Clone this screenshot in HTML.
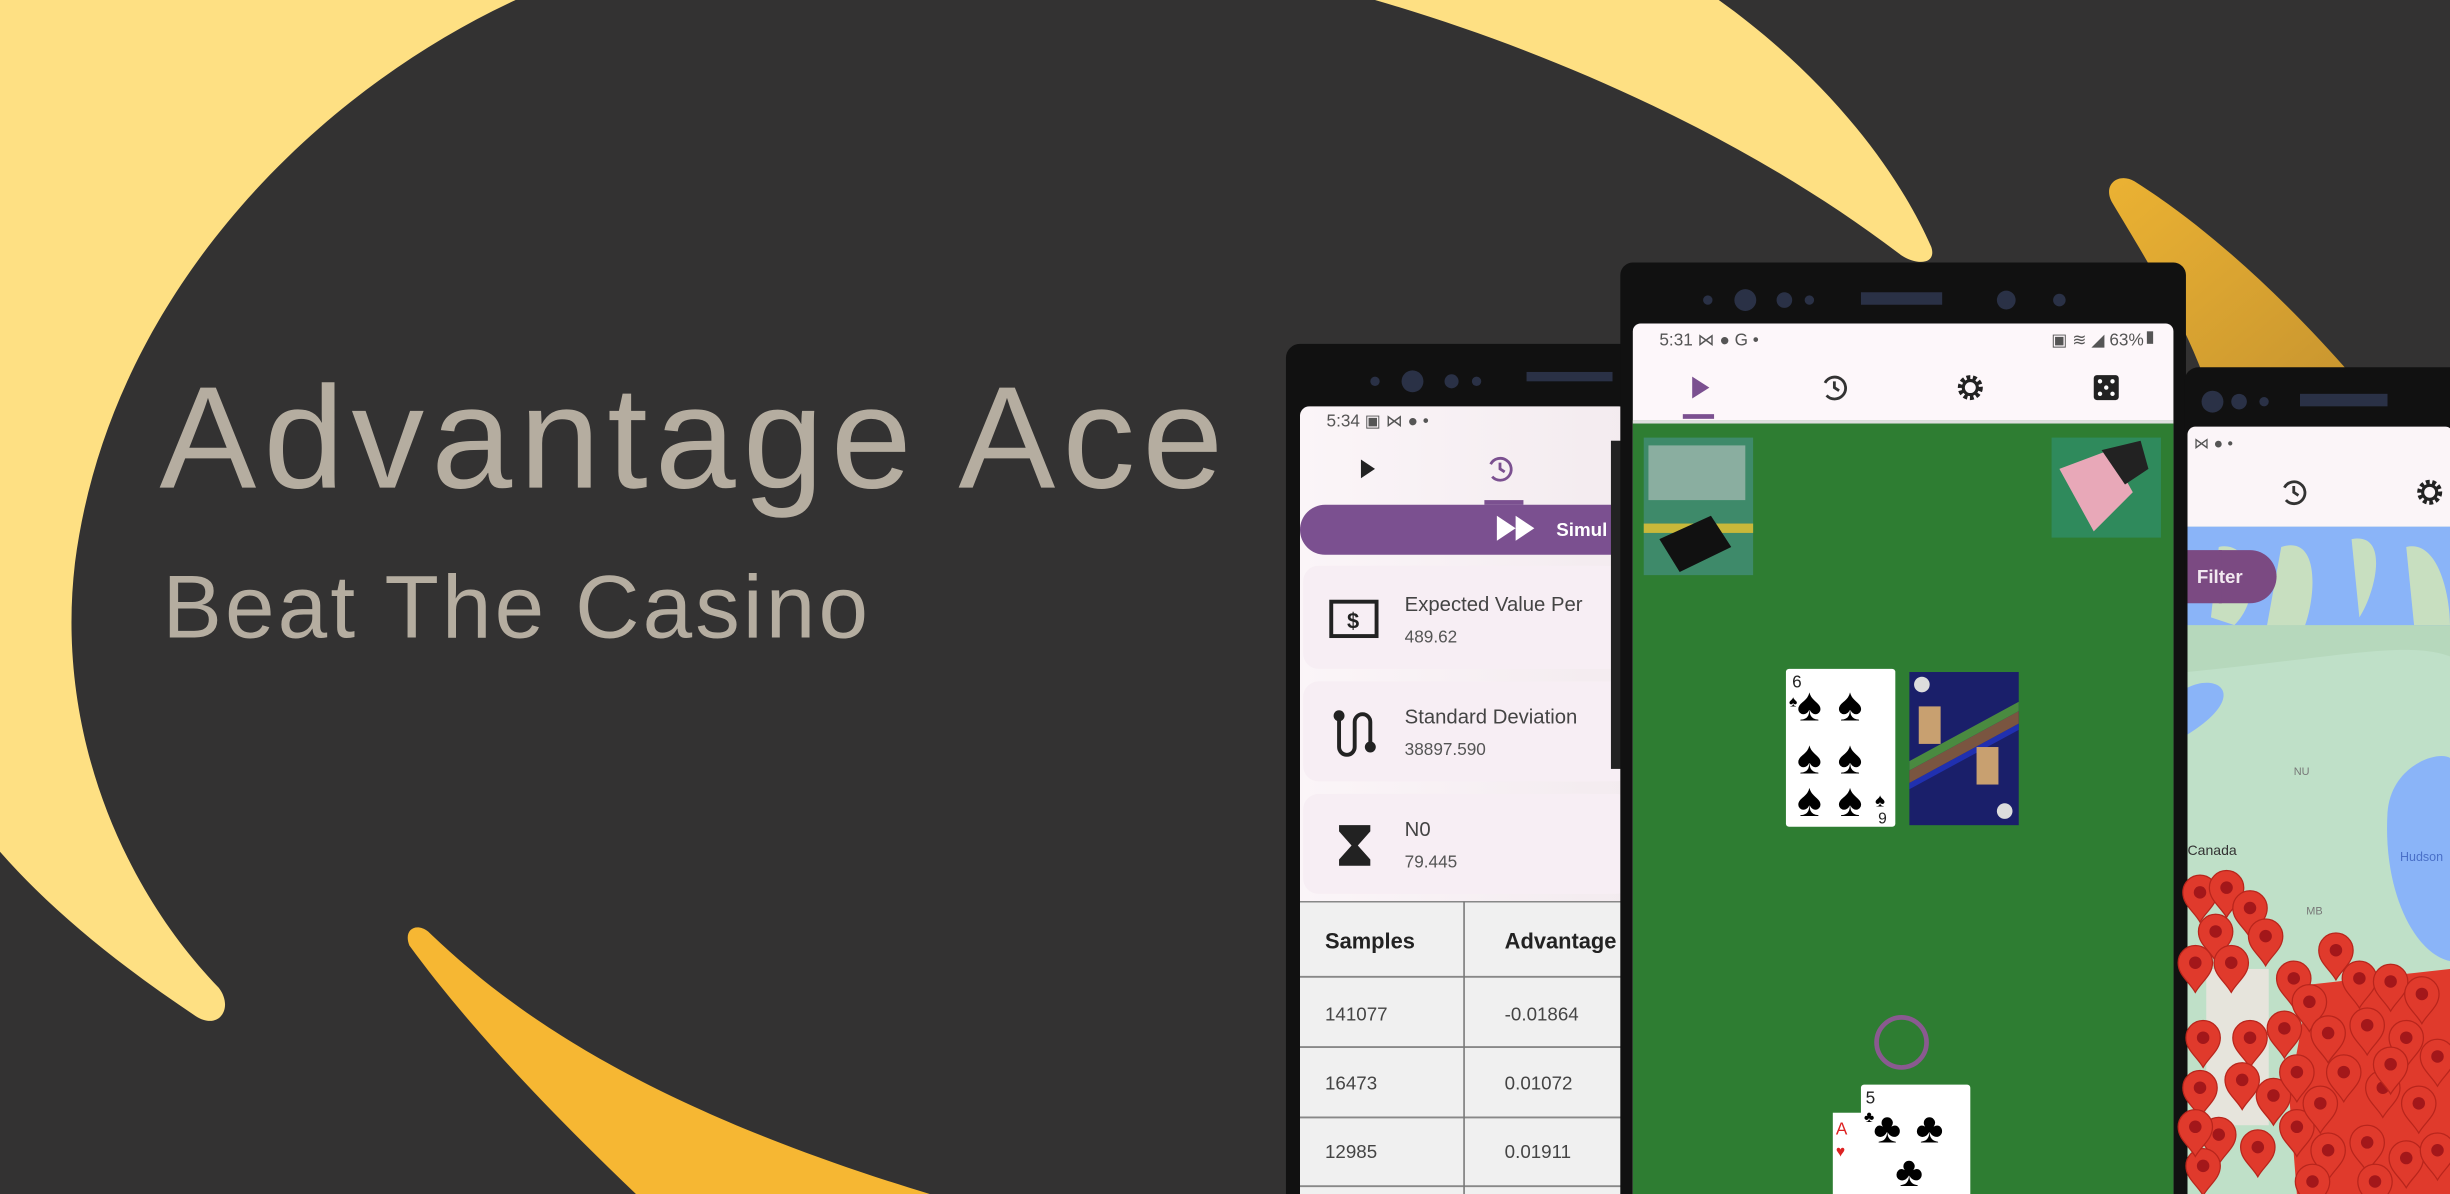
<!DOCTYPE html>
<html><head><meta charset="utf-8"><style>
html,body{margin:0;padding:0;background:#333232;overflow:hidden}
svg{display:block}
text{font-family:"Liberation Sans",sans-serif}
</style></head><body>
<svg width="2450" height="1194" viewBox="0 0 1568 764" preserveAspectRatio="none" xmlns="http://www.w3.org/2000/svg">
<defs>
<linearGradient id="gold" x1="0" y1="0" x2="1" y2="1"><stop offset="0" stop-color="#ebb233"/><stop offset="1" stop-color="#c9962f"/></linearGradient>
<linearGradient id="scr" x1="0" y1="0" x2="1" y2="0"><stop offset="0" stop-color="#fbf5f8"/><stop offset="1" stop-color="#f3ebef"/></linearGradient>
<g id="pin"><path d="M0,15 C-4,8 -11,4 -11,-4 A11,11 0 1 1 11,-4 C11,4 4,8 0,15Z" fill="#e03a2c" stroke="#b8251c" stroke-width="0.8"/><circle cx="0" cy="-4" r="4" fill="#a3171a"/></g>
</defs>
<rect width="1568" height="764" fill="#333232"/>
<path d="M0,0 L1100,0 C1170,50 1215,110 1236,158 C1240,170 1225,170 1215,162 C1120,90 1000,35 880,0 L330,0 C200,60 70,190 48,360 C35,470 80,570 140,632 C150,645 140,660 125,650 C80,620 35,585 0,545 Z" fill="#fee083"/>
<path d="M262,605 C258,595 266,590 274,596 C320,640 400,705 595,764 L407,764 C340,700 295,650 262,605 Z" fill="#f6b733"/>
<path d="M1352,130 C1345,118 1356,110 1366,116 C1420,150 1470,200 1505,240 L1410,240 C1395,200 1370,160 1352,130 Z" fill="url(#gold)"/>

<text x="102" y="312" font-size="93" fill="#b5ada0" letter-spacing="4.6">Advantage Ace</text>
<text x="104" y="408" font-size="57" fill="#b5ada0" letter-spacing="2">Beat The Casino</text>

<!-- LEFT PHONE -->
<rect x="823" y="220" width="230" height="560" rx="9" fill="#111"/>
<circle cx="880" cy="244" r="3" fill="#2a3146"/><circle cx="904" cy="244" r="7" fill="#2a3146"/><circle cx="929" cy="244" r="4.5" fill="#2a3146"/><circle cx="945" cy="244" r="3" fill="#2a3146"/>
<rect x="977" y="238" width="55" height="6" fill="#2a3146"/>
<rect x="832" y="260" width="210" height="520" rx="6" fill="url(#scr)"/>
<text x="849" y="273" font-size="11" fill="#555">5:34 ▣ ⋈ ● •</text>
<path d="M871,294 L880,300 L871,306Z" fill="#222"/>
<g transform="translate(960,300)" fill="none" stroke="#7b5090" stroke-width="1.8"><path d="M-6,-3 A7,7 0 1 1 -5,5"/><path d="M0,-4 V0 L3,2"/></g>
<rect x="950" y="320" width="25" height="3" fill="#7b5090"/>
<path d="M848,323 H1040 V355 H848 A16,16 0 0 1 848,323Z" fill="#7b5090"/>
<path d="M958,330 L970,338 L958,346Z M970,330 L982,338 L970,346Z" fill="#fff"/>
<text x="996" y="343" font-size="12" font-weight="bold" fill="#fff">Simul</text>
<rect x="834" y="362" width="210" height="66" rx="10" fill="#f7eef4"/>
<rect x="834" y="436" width="210" height="64" rx="10" fill="#f7eef4"/>
<rect x="834" y="508" width="210" height="64" rx="10" fill="#f7eef4"/>
<rect x="852" y="385" width="29" height="22" fill="none" stroke="#222" stroke-width="2.5"/>
<text x="866" y="402" font-size="14" font-weight="bold" text-anchor="middle" fill="#222">$</text>
<text x="899" y="391" font-size="13" fill="#444">Expected Value Per</text>
<text x="899" y="411" font-size="11" fill="#555">489.62</text>
<path d="M857,458 V478 A5,5 0 0 0 867,478 V462 A5,5 0 0 1 877,462 V478" fill="none" stroke="#222" stroke-width="2.5"/>
<circle cx="857" cy="458" r="3.5" fill="#222"/><circle cx="877" cy="478" r="3.5" fill="#222"/>
<text x="899" y="463" font-size="13" fill="#444">Standard Deviation</text>
<text x="899" y="483" font-size="11" fill="#555">38897.590</text>
<path d="M857,528 H877 V532 L869,541 L877,550 V554 H857 V550 L865,541 L857,532Z" fill="#222"/>
<text x="899" y="535" font-size="13" fill="#444">N0</text>
<text x="899" y="555" font-size="11" fill="#555">79.445</text>
<rect x="832" y="577" width="210" height="190" fill="#f0f0f0"/>
<line x1="832" y1="577" x2="1042" y2="577" stroke="#888"/>
<line x1="832" y1="625" x2="1042" y2="625" stroke="#888" stroke-width="1.2"/>
<line x1="832" y1="670" x2="1042" y2="670" stroke="#888" stroke-width="1.2"/>
<line x1="832" y1="715" x2="1042" y2="715" stroke="#888" stroke-width="1.2"/>
<line x1="832" y1="759" x2="1042" y2="759" stroke="#888" stroke-width="1.2"/>
<line x1="937" y1="577" x2="937" y2="764" stroke="#777"/>
<text x="848" y="607" font-size="14" font-weight="bold" fill="#222">Samples</text>
<text x="963" y="607" font-size="14" font-weight="bold" fill="#222">Advantage</text>
<text x="848" y="653" font-size="12" fill="#444">141077</text><text x="963" y="653" font-size="12" fill="#444">-0.01864</text>
<text x="848" y="697" font-size="12" fill="#444">16473</text><text x="963" y="697" font-size="12" fill="#444">0.01072</text>
<text x="848" y="741" font-size="12" fill="#444">12985</text><text x="963" y="741" font-size="12" fill="#444">0.01911</text>
<rect x="1031" y="282" width="8" height="210" fill="#222"/>

<!-- MIDDLE PHONE -->
<rect x="1037" y="168" width="362" height="610" rx="8" fill="#111"/>
<circle cx="1093" cy="192" r="3" fill="#2a3146"/><circle cx="1117" cy="192" r="7" fill="#2a3146"/><circle cx="1142" cy="192" r="5" fill="#2a3146"/><circle cx="1158" cy="192" r="3" fill="#2a3146"/>
<rect x="1191" y="187" width="52" height="8" fill="#2a3146"/>
<circle cx="1284" cy="192" r="6" fill="#2a3146"/><circle cx="1318" cy="192" r="4" fill="#2a3146"/>
<rect x="1045" y="207" width="346" height="570" rx="5" fill="#fdf7fa"/>
<text x="1062" y="221" font-size="11" fill="#555">5:31 ⋈ ● G •</text>
<text x="1372" y="221" font-size="11" fill="#555" text-anchor="end">▣ ≋ ◢ 63%</text>
<rect x="1374" y="212" width="4" height="8" fill="#555"/>
<path d="M1083,241 L1094,248 L1083,255Z" fill="#7b5090"/>
<g transform="translate(1174,248)" fill="none" stroke="#333" stroke-width="1.8"><path d="M-6,-3 A7,7 0 1 1 -5,5"/><path d="M0,-4 V0 L3,2"/></g>
<g transform="translate(1261,248)"><circle r="6" fill="none" stroke="#222" stroke-width="4" stroke-dasharray="2.2 1.5"/><circle r="4.5" fill="none" stroke="#222" stroke-width="2"/></g>
<rect x="1340" y="240" width="16" height="16" rx="2" fill="#222"/>
<circle cx="1344" cy="244" r="1.4" fill="#fff"/><circle cx="1352" cy="244" r="1.4" fill="#fff"/><circle cx="1348" cy="248" r="1.4" fill="#fff"/><circle cx="1344" cy="252" r="1.4" fill="#fff"/><circle cx="1352" cy="252" r="1.4" fill="#fff"/>
<rect x="1077" y="265" width="20" height="3" fill="#7b5090"/>
<rect x="1045" y="269" width="346" height="500" fill="#2e7d32"/>
<rect x="1045" y="269" width="346" height="2" fill="#dfdfdf"/>
<rect x="1052" y="280" width="70" height="88" fill="#3e8a6a"/>
<rect x="1055" y="285" width="62" height="35" fill="#8aaea0"/>
<rect x="1052" y="335" width="70" height="6" fill="#c8b83a"/>
<path d="M1062,345 L1095,330 L1108,350 L1075,366Z" fill="#111"/>
<rect x="1313" y="280" width="70" height="64" fill="#2f8a5c"/>
<path d="M1318,300 L1350,288 L1365,315 L1340,340Z" fill="#e8a8b8"/>
<path d="M1345,288 L1370,282 L1375,300 L1360,310Z" fill="#222"/>
<rect x="1143" y="428" width="70" height="101" rx="2" fill="#fff"/>
<text x="1147" y="440" font-size="11" fill="#222">6</text>
<text x="1145" y="452" font-size="10" fill="#000" font-family="DejaVu Sans">♠</text>
<g font-family="DejaVu Sans" font-size="30" fill="#000">
<text x="1150" y="461">♠</text><text x="1176" y="461">♠</text>
<text x="1150" y="495">♠</text><text x="1176" y="495">♠</text>
<text x="1150" y="522">♠</text><text x="1176" y="522">♠</text></g>
<text x="1200" y="516" font-size="12" fill="#000" font-family="DejaVu Sans">♠</text>
<text x="1202" y="527" font-size="10" fill="#222">9</text>
<rect x="1222" y="430" width="70" height="98" fill="#1a1f6a"/>
<path d="M1222,493 L1292,455 L1292,463 L1222,501Z" fill="#7a5540"/>
<path d="M1222,501 L1292,463 L1292,467 L1222,505Z" fill="#2030b0"/>
<path d="M1222,487 L1292,449 L1292,455 L1222,493Z" fill="#4a8a40"/>
<rect x="1228" y="452" width="14" height="24" fill="#c8a070"/><rect x="1265" y="478" width="14" height="24" fill="#c8a070"/>
<circle cx="1230" cy="438" r="5" fill="#ddd"/><circle cx="1283" cy="519" r="5" fill="#ddd"/>
<circle cx="1217" cy="667" r="16" fill="none" stroke="#8a5a90" stroke-width="3"/>
<rect x="1173" y="712" width="30" height="60" fill="#fff"/>
<text x="1175" y="726" font-size="11" fill="#d22">A</text>
<text x="1175" y="740" font-size="10" fill="#d22" font-family="DejaVu Sans">♥</text>
<rect x="1191" y="694" width="70" height="80" rx="2" fill="#fff"/>
<text x="1194" y="706" font-size="11" fill="#222">5</text>
<text x="1193" y="718" font-size="10" fill="#000" font-family="DejaVu Sans">♣</text>
<g font-family="DejaVu Sans" font-size="27" fill="#000"><text x="1199" y="731">♣</text><text x="1226" y="731">♣</text><text x="1213" y="759">♣</text></g>

<!-- RIGHT PHONE -->
<rect x="1398" y="235" width="180" height="540" rx="9" fill="#111"/>
<circle cx="1416" cy="257" r="7" fill="#2a3146"/><circle cx="1433" cy="257" r="5" fill="#2a3146"/><circle cx="1449" cy="257" r="3" fill="#2a3146"/>
<rect x="1472" y="252" width="56" height="8" fill="#2a3146"/>
<rect x="1400" y="273" width="170" height="500" rx="5" fill="#fbf5f8"/>
<text x="1404" y="287" font-size="10" fill="#555">⋈ ● •</text>
<g transform="translate(1468,315)" fill="none" stroke="#333" stroke-width="1.8"><path d="M-6,-3 A7,7 0 1 1 -5,5"/><path d="M0,-4 V0 L3,2"/></g>
<g transform="translate(1555,315)"><circle r="6" fill="none" stroke="#222" stroke-width="4" stroke-dasharray="2.2 1.5"/><circle r="4.5" fill="none" stroke="#222" stroke-width="2"/></g>
<rect x="1400" y="337" width="170" height="430" fill="#bfe0c8"/>
<rect x="1400" y="337" width="170" height="70" fill="#8ab4f8"/>
<path d="M1420,350 C1440,345 1450,380 1430,400 L1415,395Z M1460,350 C1490,340 1480,400 1470,410 L1450,405Z M1505,345 C1530,340 1520,380 1510,395Z M1540,350 C1560,345 1568,380 1568,400 L1545,400Z" fill="#c8dfc0"/>
<path d="M1400,400 H1568 V420 C1540,410 1500,420 1400,430Z" fill="#b6d8bc"/>
<path d="M1400,440 C1420,430 1440,445 1400,470Z" fill="#8ab4f8"/>
<path d="M1528,520 C1530,490 1560,480 1568,485 L1568,615 C1545,610 1525,570 1528,520Z" fill="#8ab4f8"/>
<rect x="1412" y="620" width="40" height="100" fill="#e6e4dc"/>
<text x="1400" y="547" font-size="9" fill="#333">Canada</text>
<text x="1536" y="551" font-size="8" fill="#4a70c8">Hudson</text>
<text x="1468" y="496" font-size="7" fill="#777">NU</text>
<text x="1476" y="585" font-size="7" fill="#777">MB</text>
<text x="1517" y="627" font-size="7" fill="#777">ON</text>
<path d="M1420,352 H1440 A17,17 0 0 1 1440,386 H1420Z" fill="#7b4a82"/>
<rect x="1400" y="352" width="22" height="34" fill="#7b4a82"/>
<text x="1406" y="373" font-size="12" font-weight="bold" fill="#f2e8f0">Filter</text>
<path d="M1478,630 L1568,620 L1568,764 L1470,764 L1465,700Z" fill="#e03a2c"/>
<g>
<use href="#pin" x="1408" y="575"/><use href="#pin" x="1425" y="572"/><use href="#pin" x="1440" y="585"/><use href="#pin" x="1418" y="600"/>
<use href="#pin" x="1450" y="603"/><use href="#pin" x="1428" y="620"/><use href="#pin" x="1468" y="630"/><use href="#pin" x="1495" y="612"/>
<use href="#pin" x="1478" y="645"/><use href="#pin" x="1440" y="668"/><use href="#pin" x="1410" y="668"/><use href="#pin" x="1462" y="662"/>
<use href="#pin" x="1408" y="700"/><use href="#pin" x="1435" y="695"/><use href="#pin" x="1455" y="705"/><use href="#pin" x="1420" y="730"/>
<use href="#pin" x="1445" y="738"/><use href="#pin" x="1410" y="750"/><use href="#pin" x="1470" y="725"/><use href="#pin" x="1490" y="740"/>
<use href="#pin" x="1510" y="630"/><use href="#pin" x="1530" y="632"/><use href="#pin" x="1550" y="640"/><use href="#pin" x="1490" y="665"/>
<use href="#pin" x="1515" y="660"/><use href="#pin" x="1540" y="668"/><use href="#pin" x="1560" y="680"/><use href="#pin" x="1500" y="690"/>
<use href="#pin" x="1525" y="700"/><use href="#pin" x="1548" y="710"/><use href="#pin" x="1485" y="710"/><use href="#pin" x="1515" y="735"/>
<use href="#pin" x="1540" y="745"/><use href="#pin" x="1560" y="740"/><use href="#pin" x="1480" y="760"/><use href="#pin" x="1520" y="760"/>
<use href="#pin" x="1405" y="620"/><use href="#pin" x="1405" y="725"/><use href="#pin" x="1470" y="690"/><use href="#pin" x="1530" y="685"/>
</g>
</svg>
</body></html>
